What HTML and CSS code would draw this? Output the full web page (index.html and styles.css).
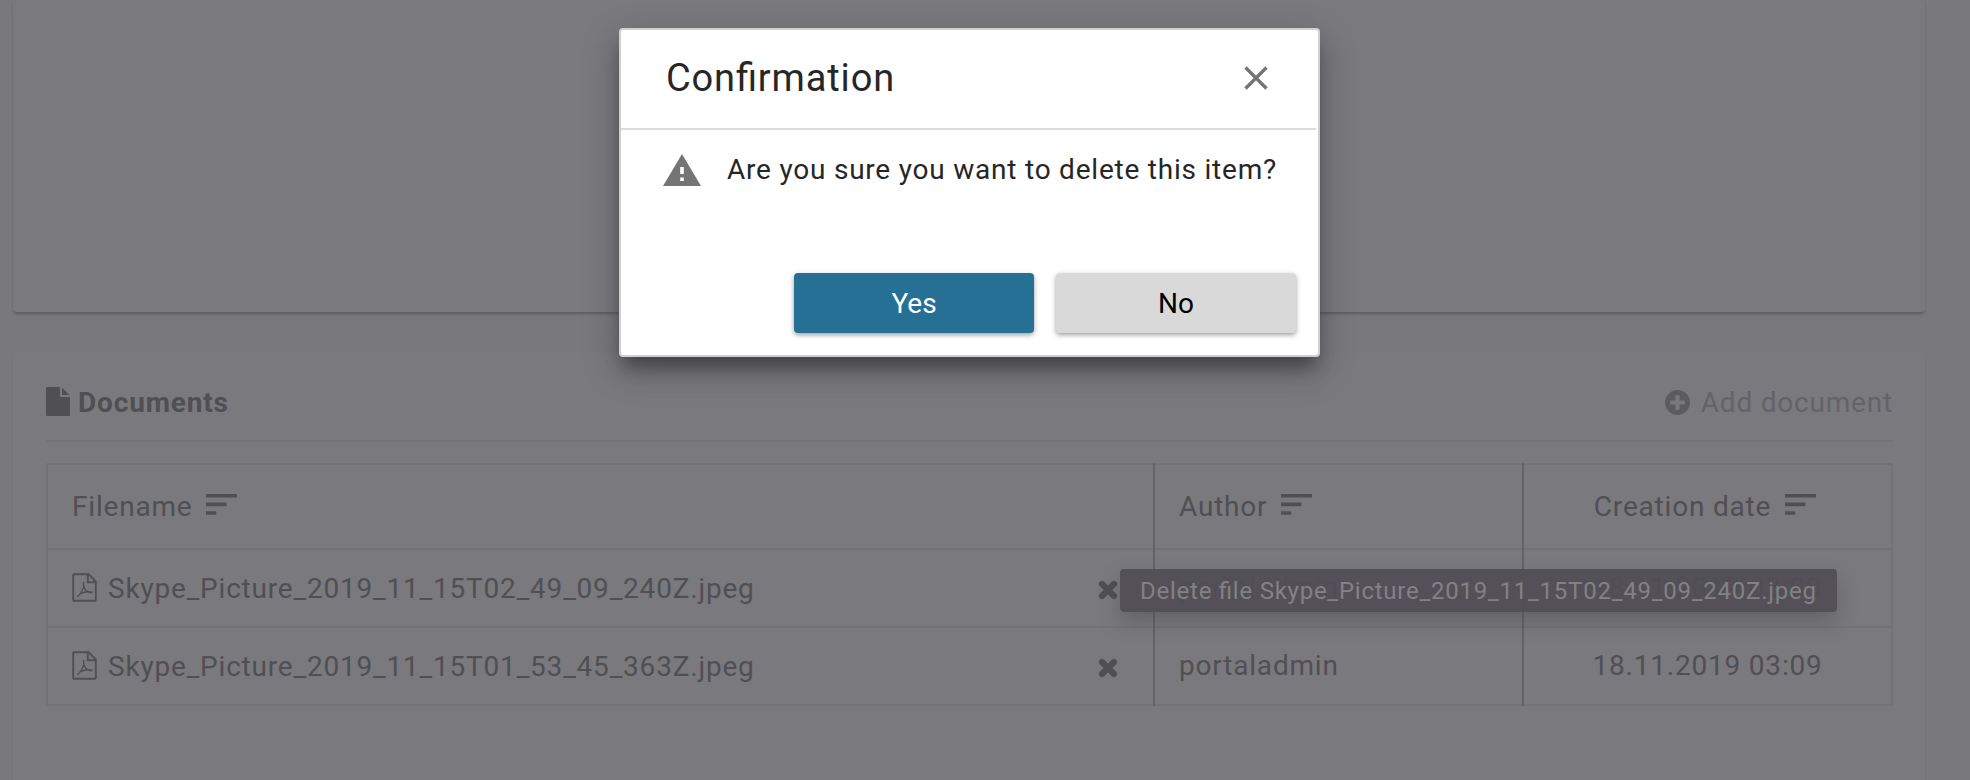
FILE: index.html
```html
<!DOCTYPE html>
<html lang="en">
<head>
<meta charset="utf-8">
<title>Documents</title>
<link rel="stylesheet" href="styles.css">
</head>
<body>
<svg class="defs" width="0" height="0">
  <symbol id="sort" viewBox="0 0 31 22"><path d="M0 0h31v3.6H0zM0 8.6h20.500v3.600H0zM0 17.200h10.300v3.600H0z"/></symbol>
  <symbol id="pdf" viewBox="0 0 25 29"><path d="M1.200 2.200q0-1 1-1H16.500L23.800 8.500V26.800q0 1-1 1H2.200q-1 0-1-1zM15.800 1.200V9.200H23.800" fill="none" stroke="currentColor" stroke-width="1.900"/><path d="M5 23.700C8 22.500 11.200 16.500 11.700 13.500C12 11.500 11.600 9.500 11.500 9C11.300 13 13 17.500 16.500 19.200C18.500 20 20 19.700 20.200 19.200C17 18 10.500 19.200 7.500 21.200" fill="none" stroke="currentColor" stroke-width="1.300"/></symbol>
  <symbol id="times" viewBox="0 0 20 20"><path d="M4 4L16 16M16 4L4 16" stroke="currentColor" stroke-width="6.200" stroke-linecap="round"/></symbol>
</svg>
<main class="page">
  <section class="panel panel-top"></section>
  <section class="panel panel-docs">
    <header class="docs-head">
      <h2 class="docs-title">
        <svg class="icon-file" viewBox="0 0 24 29"><path d="M0 1.300Q0 0 1.300 0H14V10H24V27.700Q24 29 22.700 29H1.300Q0 29 0 27.700zM16 .5L23.500 8H16z"/></svg>
        <span class="docs-label">Documents</span>
      </h2>
      <a class="add">
        <svg class="icon-add" viewBox="0 0 24 24"><path fill-rule="evenodd" d="M12 0a12 12 0 1 0 0 24a12 12 0 1 0 0-24zM10 5h4v5h5v4h-5v5h-4v-5H5v-4h5z"/></svg>
        <span>Add document</span>
      </a>
    </header>
    <div class="table">
      <div class="row row-head">
        <div class="cell"><span>Filename</span><svg class="icon-sort"><use href="#sort"/></svg></div>
        <div class="cell"><span>Author</span><svg class="icon-sort"><use href="#sort"/></svg></div>
        <div class="cell center"><span>Creation date</span><svg class="icon-sort"><use href="#sort"/></svg></div>
      </div>
      <div class="row">
        <div class="cell"><svg class="icon-pdf"><use href="#pdf"/></svg><span class="name">Skype_Picture_2019_11_15T02_49_09_240Z.jpeg</span><svg class="icon-del"><use href="#times"/></svg>
          <div class="tooltip">Delete file Skype_Picture_2019_11_15T02_49_09_240Z.jpeg</div>
        </div>
        <div class="cell">portaladmin</div>
        <div class="cell center">18.11.2019 03:09</div>
      </div>
      <div class="row">
        <div class="cell"><svg class="icon-pdf"><use href="#pdf"/></svg><span class="name">Skype_Picture_2019_11_15T01_53_45_363Z.jpeg</span><svg class="icon-del"><use href="#times"/></svg></div>
        <div class="cell">portaladmin</div>
        <div class="cell center">18.11.2019 03:09</div>
      </div>
    </div>
  </section>
</main>
<div class="dialog" role="dialog">
  <header class="dialog-head">
    <h1 class="dialog-title">Confirmation</h1>
    <svg class="icon-close" viewBox="0 0 24 24"><path d="M1.500 1.500L22.500 22.500M22.500 1.500L1.500 22.500" stroke="#757575" stroke-width="3.300"/></svg>
  </header>
  <div class="dialog-body">
    <svg class="icon-warn" viewBox="0 0 38 32"><path fill-rule="evenodd" d="M0 32L19 0L38 32zM17.200 13v7h3.600v-7zM17.200 23.400v3.600h3.600v-3.600z"/></svg>
    <span class="question">Are you sure you want to delete this item?</span>
  </div>
  <footer class="dialog-foot">
    <button class="btn btn-yes">Yes</button>
    <button class="btn btn-no">No</button>
  </footer>
</div>
</body>
</html>
```
FILE: styles.css
```css
* { box-sizing: border-box; }
body {
  margin: 0;
  height: 780px;
  overflow: hidden;
  position: relative;
  background: #79787c;
  color: #504f54;
  font: 28px/36px Roboto, sans-serif;
  letter-spacing: 0.8px;
}
.defs { position: absolute; }
svg { display: block; flex: none; fill: currentColor; }
.page { padding: 0 45px 0 13px; display: flex; flex-direction: column; gap: 40px; }
.panel { background: #7a797d; border-radius: 4px; }
.panel-top { height: 312px; box-shadow: 0 3px 3px -1px rgba(60, 59, 64, .45), 0 0 2px rgba(60, 59, 64, .1); }
.panel-docs { height: 460px; padding: 0 32px 0 33px; box-shadow: 0 3px 2px rgba(60, 59, 64, .14); }
.docs-head {
  height: 90px;
  padding-top: 11px;
  border-bottom: 2px solid #747377;
  display: flex;
  align-items: center;
  justify-content: space-between;
}
.docs-title { margin: 0; font-size: 28px; font-weight: 700; display: flex; align-items: center; gap: 8px; letter-spacing: .85px; }
.docs-label { padding-top: 2px; }
.icon-file { width: 24px; height: 29px; margin-top: -1px; }
.add { display: flex; align-items: center; gap: 11px; color: #646368; padding-top: 2px; }
.icon-add { width: 25px; height: 25px; color: #5c5b60; margin-top: -1px; }
.table { margin-top: 21px; border: 2px solid #737276; }
.row { display: grid; grid-template-columns: 1105px 369px 1fr; height: 78px; }
.row + .row { border-top: 2px solid #737276; }
.row-head { height: 83px; }
.cell { position: relative; display: flex; align-items: center; padding: 1px 24px 0; }
.cell + .cell { border-left: 2px solid #646368; margin: -2px 0 0; }
.row-head .cell + .cell { padding-top: 3px; }
.row:last-child .cell + .cell { margin-bottom: -2px; padding-bottom: 2px; }
.cell.center { justify-content: center; padding-left: 0; padding-right: 0; }
.row-head .cell.center { padding-right: 5px; }
.icon-sort { width: 31px; height: 22px; margin-left: 14px; margin-top: -5px; }
.icon-pdf { width: 25px; height: 29px; margin: -2px 11px 0 0; }
.name { flex: 1; }
.icon-del { width: 20px; height: 20px; margin-right: 11px; margin-top: 3px; }
.tooltip {
  position: absolute;
  z-index: 2;
  left: 1072px;
  top: 19px;
  width: 717px;
  height: 43px;
  padding-left: 20px;
  border-radius: 4px;
  background: rgba(80, 79, 84, .93);
  color: #828185;
  font-size: 24px;
  line-height: 44px;
  letter-spacing: .75px;
  font-feature-settings: "liga" 1;
  white-space: nowrap;
  box-shadow: 0 10px 20px rgba(60, 59, 64, .35);
}
.dialog {
  position: absolute;
  z-index: 5;
  left: 619px;
  top: 28px;
  width: 701px;
  height: 329px;
  border: 2px solid #d0d0d0;
  border-radius: 4px;
  background: #fff;
  color: #262626;
  box-shadow: 0 14px 18px -4px rgba(40, 40, 40, .6), 0 12px 36px rgba(40, 40, 40, .26);
  display: flex;
  flex-direction: column;
}
.dialog-head {
  height: 100px;
  margin-right: 2px;
  padding: 0 48px 2px 45px;
  border-bottom: 2px solid #dcdcdc;
  display: flex;
  align-items: center;
  justify-content: space-between;
}
.dialog-title { margin: 0; font-size: 38px; font-weight: 400; letter-spacing: .85px; font-feature-settings: "liga" 1; }
.icon-close { width: 24px; height: 24px; }
.dialog-body { flex: 1; padding: 22px 0 0 42px; display: flex; align-items: flex-start; gap: 26px; }
.icon-warn { width: 38px; height: 32px; margin-top: 2px; color: #757575; }
.question { letter-spacing: .78px; }
.dialog-foot { display: flex; justify-content: flex-end; gap: 22px; padding: 0 22px 22px 0; }
.btn {
  width: 240px;
  height: 60px;
  border: 0;
  border-radius: 4px;
  font: 28px/60px Roboto, sans-serif;
  padding: 1px 0 0;
  box-shadow: 0 2px 5px rgba(0, 0, 0, .38);
}
.btn-yes { background: #267095; color: #fff; }
.btn-no { background: #d9d9d9; color: #000; }
```
